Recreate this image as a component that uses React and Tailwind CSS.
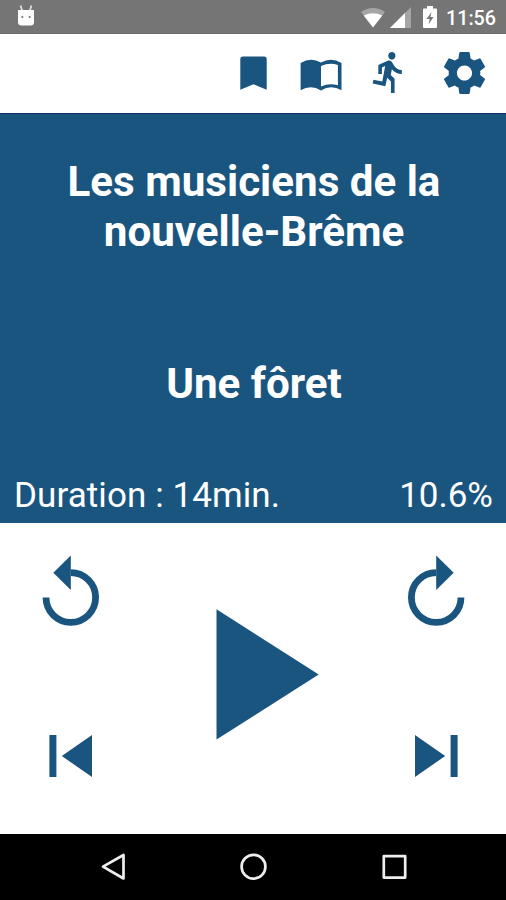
import React from "react";

const GEAR_PATH =
  "M19.43 12.98c.04-.32.07-.64.07-.98s-.03-.66-.07-.98l2.11-1.65c.19-.15.24-.42.12-.64l-2-3.46c-.12-.22-.39-.3-.61-.22l-2.49 1c-.52-.4-1.08-.73-1.69-.98l-.38-2.65C14.46 2.18 14.25 2 14 2h-4c-.25 0-.46.18-.49.42l-.38 2.65c-.61.25-1.17.59-1.69.98l-2.49-1c-.23-.09-.49 0-.61.22l-2 3.46c-.13.22-.07.49.12.64l2.11 1.65c-.04.32-.07.65-.07.98s.03.66.07.98l-2.11 1.65c-.19.15-.24.42-.12.64l2 3.46c.12.22.39.3.61.22l2.49-1c.52.4 1.08.73 1.69.98l.38 2.65c.03.24.24.42.49.42h4c.25 0 .46-.18.49-.42l.38-2.65c.61-.25 1.17-.59 1.69-.98l2.49 1c.23.09.49 0 .61-.22l2-3.46c.12-.22.07-.49-.12-.64l-2.11-1.65zM12 15.6c-1.98 0-3.6-1.62-3.6-3.6s1.62-3.6 3.6-3.6 3.6 1.62 3.6 3.6-1.62 3.6-3.6 3.6z";

const RUN_PATH =
  "M13.49 5.48c1.1 0 2-.9 2-2s-.9-2-2-2-2 .9-2 2 .9 2 2 2zm-3.6 13.9l1-4.4 2.1 2v6h2v-7.5l-2.1-2 .6-3c1.3 1.5 3.3 2.5 5.5 2.5v-2c-1.9 0-3.5-1-4.3-2.4l-1-1.6c-.4-.6-1-1-1.7-1-.3 0-.5.1-.8.1l-5.2 2.2v4.7h2v-3.4l1.8-.7-1.6 8.1-4.9-1-.4 2 7 1.4z";

function StatusBar() {
  return (
    <div className="flex h-[34px] shrink-0 items-start border-b border-[#6a6a6a] bg-[#757575] pl-[17px] pr-[10px]">
      {/* android debug face */}
      <svg className="mt-[5px] h-[21px] w-[18px]" viewBox="0 0 18 21" fill="#fff">
        <path d="M3.500.5l1.800 5.500M14.500.5l-1.800 5.500" stroke="#fff" strokeWidth="1.700" opacity=".8" />
        <path d="M1 5h16v12q0 3.500-3.500 3.500h-9Q1 20.500 1 17z" />
        <circle cx="5.300" cy="12" r="1.100" fill="#757575" />
        <circle cx="12.700" cy="12" r="1.100" fill="#757575" />
      </svg>

      {/* wifi */}
      <svg className="ml-auto mt-[8px] h-[20px] w-[24px]" viewBox="0 0 24 20" fill="#fff">
        <path d="M0 4Q12-4 24 4L12 19.500z" opacity=".35" />
        <path d="M2.700 7.500Q12 3 21.300 7.500L12 19.500z" />
      </svg>

      {/* mobile signal */}
      <svg className="ml-[5px] mt-[7px] h-[21px] w-[21px]" viewBox="0 0 21 21" fill="#fff">
        <path d="M0 21L21 0v21z" opacity=".35" />
        <path d="M0 21L15 6v15z" />
      </svg>

      {/* charging battery */}
      <svg className="ml-[12px] mt-[6px] h-[22px] w-[14px]" viewBox="0 0 14 22">
        <path d="M4 0h6v2.500h3q1 0 1 1V21q0 1-1 1H1q-1 0-1-1V3.500q0-1 1-1h3z" fill="#fff" />
        <path d="M8.500 6L3.500 13h3.200l-1.200 5.500 5-7.500H7.400z" fill="#757575" />
      </svg>

      <span className="ml-[9px] mt-[7px] text-[19.700px] font-medium leading-[24px] text-white">11:56</span>
    </div>
  );
}

function Toolbar() {
  return (
    <header className="flex h-[79px] shrink-0 items-start justify-end bg-white pr-[21px] text-[#1a5580]">
      <button className="mt-[22px]">
        <svg className="h-[34px] w-[27px]" viewBox="0 0 27 34" fill="currentColor">
          <path d="M3 .5h21q2.700 0 2.700 2.700v30.600L13.500 28.300.3 33.800V3.200Q.3.500 3 .5z" />
        </svg>
      </button>
      <button className="ml-[33px] mt-[25px]">
        <svg className="h-[32px] w-[42px]" viewBox="0 0 42 32" fill="none">
          <path
            d="M.6 4Q11-2.500 21 3.600 31-2.500 41.500 4v27.300Q31 25 21 31.500 11 25 .6 31.300zM21 7v20.500q8.500-4 16.900-1.200V6Q29.500 3 21 7z"
            fill="currentColor"
            fillRule="evenodd"
          />
        </svg>
      </button>
      <button className="ml-[30px] mt-[18px]">
        <svg className="h-[41px] w-[30px]" viewBox="2.500 1.480 16.600 21.500" preserveAspectRatio="none" fill="currentColor">
          <path d={RUN_PATH} />
        </svg>
      </button>
      <button className="ml-[42px] mt-[18px]">
        <svg className="h-[42px] w-[41px]" viewBox="2.270 2 19.460 20" preserveAspectRatio="none" fill="currentColor">
          <path d={GEAR_PATH} />
        </svg>
      </button>
    </header>
  );
}

function BookInfo() {
  return (
    <section className="flex h-[410px] shrink-0 flex-col border-t border-[#0d2f66] bg-[#1a5580] text-white">
      <h1 className="mt-[43px] pl-[2px] text-center text-[42.150px] font-bold leading-[50px]">
        Les musiciens de la
        <br />
        nouvelle-Brême
      </h1>
      <h2 className="mt-[102px] pl-[2px] text-center text-[42.150px] font-bold leading-[50px]">Une fôret</h2>
      <div className="mt-auto flex justify-between pb-[6px] pl-[14px] pr-[13px] text-[35px] leading-[42px]">
        <span className="tracking-[0.080px]">Duration : 14min.</span>
        <span>10.6%</span>
      </div>
    </section>
  );
}

function TurnIcon({ className = "" }) {
  return (
    <svg className={`h-[71px] w-[58px] ${className}`} viewBox="0 0 58 71">
      <path d="M4 42.500A24.800 24.800 0 1 0 28.800 17.700" fill="none" stroke="currentColor" strokeWidth="6.800" />
      <path d="M28.800.5v34.500L11.300 17.700z" fill="currentColor" />
    </svg>
  );
}

function SkipIcon({ className = "" }) {
  return (
    <svg className={`h-[42px] w-[43px] ${className}`} viewBox="0 0 43 42" fill="currentColor">
      <path d="M.4 0h7v42h-7zM43 0v42L12.800 21z" />
    </svg>
  );
}

function Controls() {
  return (
    <main className="flex h-[311px] shrink-0 justify-between bg-white pl-[42px] pr-[41px] text-[#1a5580]">
      <div className="flex flex-col items-start pt-[32px]">
        <button><TurnIcon /></button>
        <button className="ml-[7px] mt-[109px]"><SkipIcon /></button>
      </div>
      <button className="flex pl-[28px] pt-[86px]">
        <svg className="h-[131px] w-[103px]" viewBox="0 0 103 131" fill="currentColor">
          <path d="M.5.300v130.200L102.700 65.500z" />
        </svg>
      </button>
      <div className="flex flex-col items-end pt-[32px]">
        <button><TurnIcon className="-scale-x-100" /></button>
        <button className="mr-[7px] mt-[109px]"><SkipIcon className="-scale-x-100" /></button>
      </div>
    </main>
  );
}

function NavBar() {
  return (
    <nav className="flex h-[66px] shrink-0 items-center justify-between bg-black pl-[101px] pr-[99px]">
      <svg className="h-[28px] w-[25px]" viewBox="0 0 25 28" fill="none" stroke="#eee" strokeWidth="2.700" strokeLinejoin="round">
        <path d="M22.500 2v23.500L2 13.700z" />
      </svg>
      <svg className="h-[28px] w-[28px]" viewBox="0 0 28 28" fill="none" stroke="#eee" strokeWidth="2.700">
        <circle cx="13.500" cy="13.700" r="11.900" />
      </svg>
      <svg className="h-[28px] w-[25px]" viewBox="0 0 25 28" fill="none" stroke="#eee" strokeWidth="2.700" strokeLinejoin="round">
        <path d="M1.800 3.200h21.400v21.400H1.800z" />
      </svg>
    </nav>
  );
}

export default function App() {
  return (
    <div className="flex h-[900px] w-[506px] flex-col overflow-hidden bg-white font-['Roboto',sans-serif]">
      <StatusBar />
      <Toolbar />
      <BookInfo />
      <Controls />
      <NavBar />
    </div>
  );
}
